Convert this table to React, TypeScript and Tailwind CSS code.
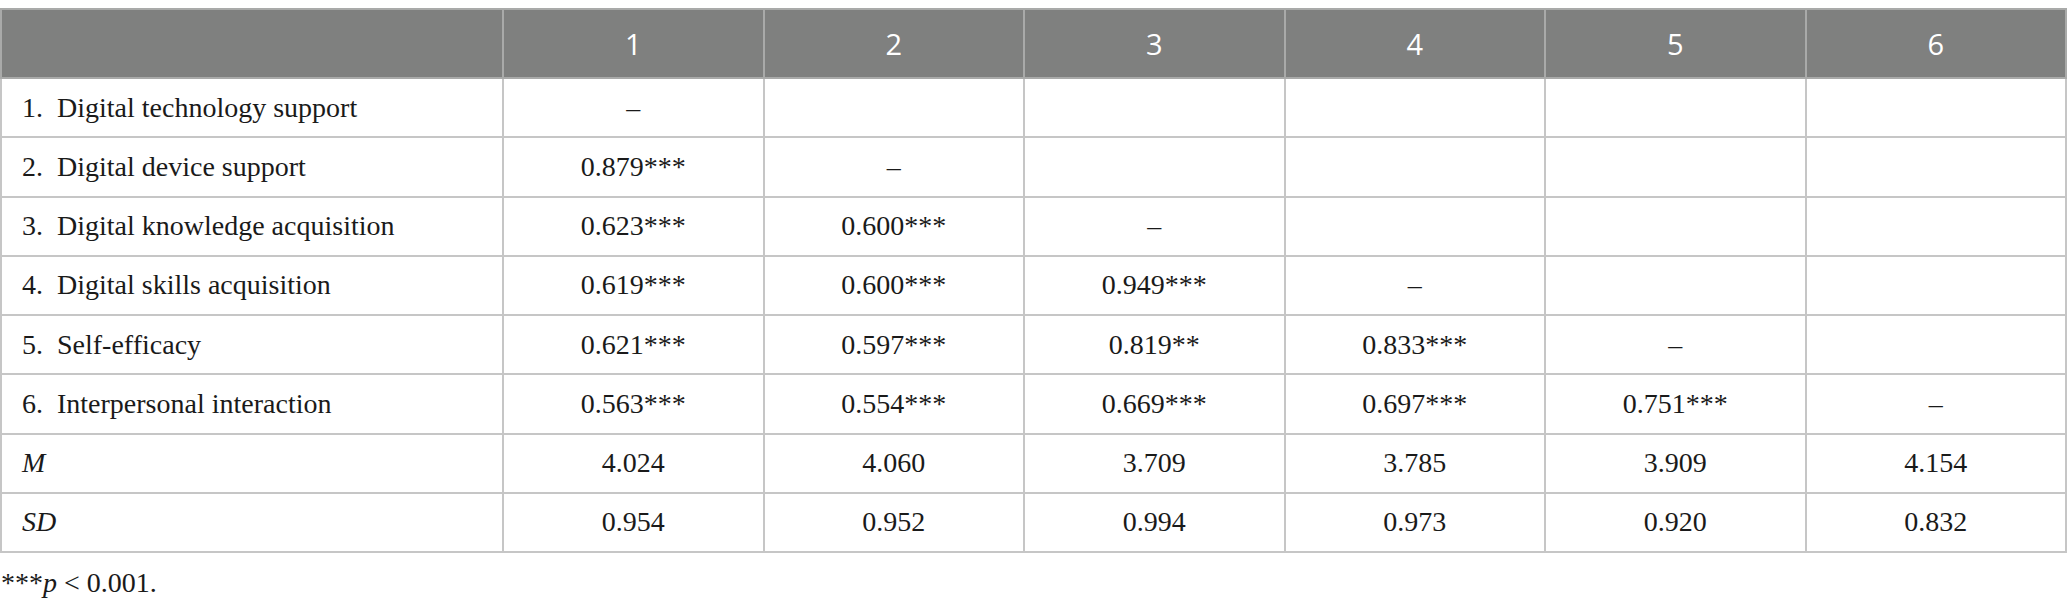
import React from "react";

const rows: { label: React.ReactNode; cells: string[] }[] = [
  { label: "1.  Digital technology support", cells: ["–", "", "", "", "", ""] },
  { label: "2.  Digital device support", cells: ["0.879***", "–", "", "", "", ""] },
  { label: "3.  Digital knowledge acquisition", cells: ["0.623***", "0.600***", "–", "", "", ""] },
  { label: "4.  Digital skills acquisition", cells: ["0.619***", "0.600***", "0.949***", "–", "", ""] },
  { label: "5.  Self-efficacy", cells: ["0.621***", "0.597***", "0.819**", "0.833***", "–", ""] },
  { label: "6.  Interpersonal interaction", cells: ["0.563***", "0.554***", "0.669***", "0.697***", "0.751***", "–"] },
  { label: <i>M</i>, cells: ["4.024", "4.060", "3.709", "3.785", "3.909", "4.154"] },
  { label: <i>SD</i>, cells: ["0.954", "0.952", "0.994", "0.973", "0.920", "0.832"] },
];

export default function App() {
  return (
    <div className="w-[2067px] h-[610px] bg-white pt-[8px]" style={{ fontFamily: '"Liberation Serif", serif' }}>
      <table className="w-[2067px] border-collapse table-fixed">
        <colgroup>
          <col className="w-[502px]" />
          <col />
          <col />
          <col />
          <col />
          <col />
          <col />
        </colgroup>
        <thead>
          <tr className="h-[69px] bg-[#7f807f]">
            <th className="border-2 border-[#a9aaa9]"></th>
            {[1, 2, 3, 4, 5, 6].map((n) => (
              <th
                key={n}
                className="border-2 border-[#a9aaa9] text-white text-[29px] font-normal text-center"
                style={{ fontFamily: '"Open Sans", sans-serif' }}
              >
                {n}
              </th>
            ))}
          </tr>
        </thead>
        <tbody>
          {rows.map((r, i) => (
            <tr key={i} className="h-[59.25px]">
              <td className="border-2 border-[#c6c6c6] pl-[20px] text-[28px] text-[#1a1a1a] whitespace-pre">{r.label}</td>
              {r.cells.map((c, j) => (
                <td key={j} className="border-2 border-[#c6c6c6] text-center text-[28px] text-[#1a1a1a]">
                  {c}
                </td>
              ))}
            </tr>
          ))}
        </tbody>
      </table>
      <div className="pl-[1px] pt-[12px] text-[28px] leading-[36px] text-[#1a1a1a]">
        ***<i>p</i> &lt; 0.001.
      </div>
    </div>
  );
}
